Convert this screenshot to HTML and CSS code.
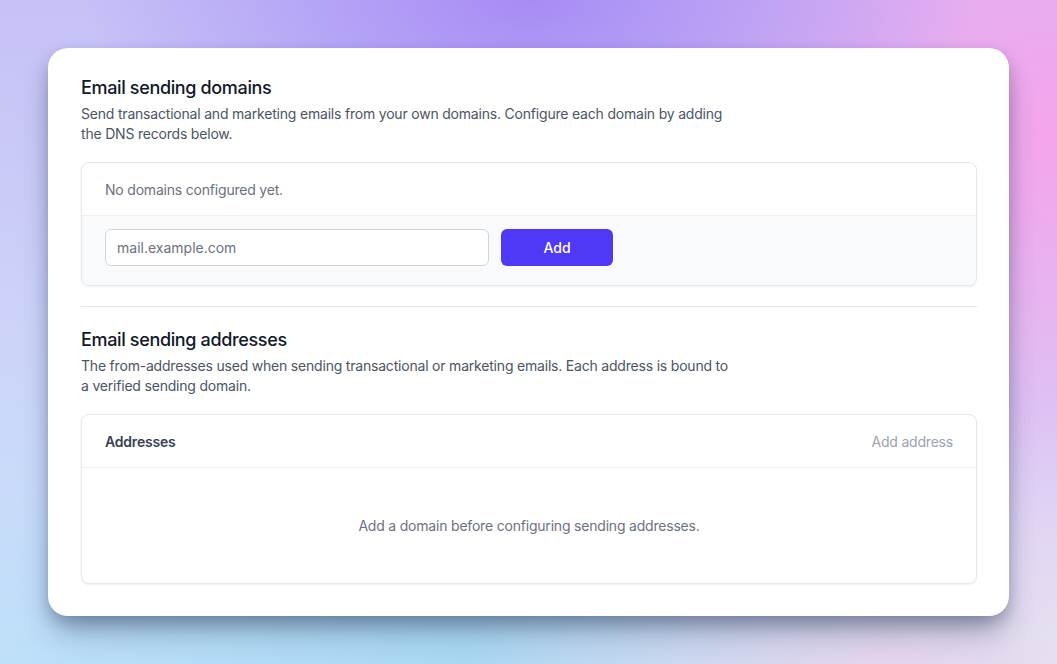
FILE: index.html
```html
<!DOCTYPE html>
<html lang="en">
<head>
    <meta charset="UTF-8">
    <meta name="viewport" content="width=device-width, initial-scale=1.0">
    <title>Email settings</title>
    <link rel="stylesheet" href="styles.css">
</head>
<body>
    <div class="panel">
        <section class="group">
            <h2>Email sending domains</h2>
            <p class="desc">Send transactional and marketing emails from your own domains. Configure each domain by adding the DNS records below.</p>
            <div class="box">
                <div class="box-row muted">No domains configured yet.</div>
                <form class="box-footer" onsubmit="return false">
                    <input type="text" class="field" placeholder="mail.example.com">
                    <button type="submit" class="btn-primary">Add</button>
                </form>
            </div>
        </section>

        <hr class="divider">

        <section class="group">
            <h2>Email sending addresses</h2>
            <p class="desc">The from-addresses used when sending transactional or marketing emails. Each address is bound to a verified sending domain.</p>
            <div class="box">
                <div class="box-row box-head">
                    <span class="box-title">Addresses</span>
                    <a href="javascript:void(0)" class="link-disabled">Add address</a>
                </div>
                <div class="empty">Add a domain before configuring sending addresses.</div>
            </div>
        </section>
    </div>
</body>
</html>
```

FILE: styles.css
```css
* { box-sizing: border-box; }
html, body { height: 100%; }
body {
    margin: 0;
    padding: 48px;
    font-family: Inter, 'Noto Sans', sans-serif;
    letter-spacing: -0.2px;
    color: #111827;
    background:
        radial-gradient(ellipse 42% 35% at 50% 0%, #a78bf5 0%, rgba(167, 139, 245, 0) 100%),
        radial-gradient(ellipse 45% 75% at 100% 20%, #f5a4ec 0%, rgba(245, 164, 236, 0) 100%),
        radial-gradient(ellipse 40% 30% at 84% 100%, #e4d4ec 0%, rgba(228, 212, 236, 0) 100%),
        radial-gradient(ellipse 22% 40% at 100% 100%, #eceef6 0%, rgba(236, 238, 246, 0) 100%),
        radial-gradient(ellipse 55% 40% at 45% 100%, #a8d7f2 0%, rgba(168, 215, 242, 0) 100%),
        linear-gradient(180deg, #c6c0f7 0%, #cdd4f8 50%, #c4e2fb 100%);
}

.panel {
    background: #fff;
    border-radius: 20px;
    padding: 28px 32px 32px 33px;
    box-shadow: 0 18px 30px -6px rgba(30, 50, 80, 0.45), 0 6px 14px rgba(20, 30, 60, 0.18);
}

h2 { margin: 0; font-size: 18px; line-height: 24px; font-weight: 450; letter-spacing: -0.35px; color: #111827; }
.desc { margin: 4px 0 19px; max-width: 650px; font-size: 14px; line-height: 19.5px; color: #4b5563; }

.box {
    border: 1px solid #e5e7eb;
    border-radius: 8px;
    background: #fff;
    box-shadow: 0 1px 2px rgba(0, 0, 0, 0.06);
    overflow: hidden;
    font-size: 14px;
    line-height: 20px;
}
.box-row { padding: 17px 23px 15px; }
.muted { color: #6b7280; }
.box-footer {
    display: flex;
    gap: 12px;
    margin: 0;
    padding: 13px 23px 19px;
    background: #f9fafb;
    border-top: 1px solid #f0f1f3;
}
.field {
    width: 384px;
    height: 37px;
    padding: 0 11px;
    border: 1px solid #d1d5db;
    border-radius: 6px;
    font: inherit;
    color: #111827;
    background: #fff;
}
.field::placeholder { color: #6b7280; }
.btn-primary {
    width: 112px;
    height: 37px;
    border: none;
    border-radius: 6px;
    background: #4f39f6;
    color: #fff;
    font: inherit;
    font-weight: 450;
    cursor: pointer;
}
.btn-primary:hover { background: #432dd7; }

.divider { border: 0; border-top: 1px solid #e5e7eb; margin: 20px 0 21px; }

.box-head { display: flex; justify-content: space-between; border-bottom: 1px solid #f0f1f3; }
.box-title { font-weight: 600; color: #374151; }
.link-disabled { color: #9ca3af; text-decoration: none; cursor: default; }
.empty { padding: 48px 24px 47px; text-align: center; color: #6b7280; }
```
